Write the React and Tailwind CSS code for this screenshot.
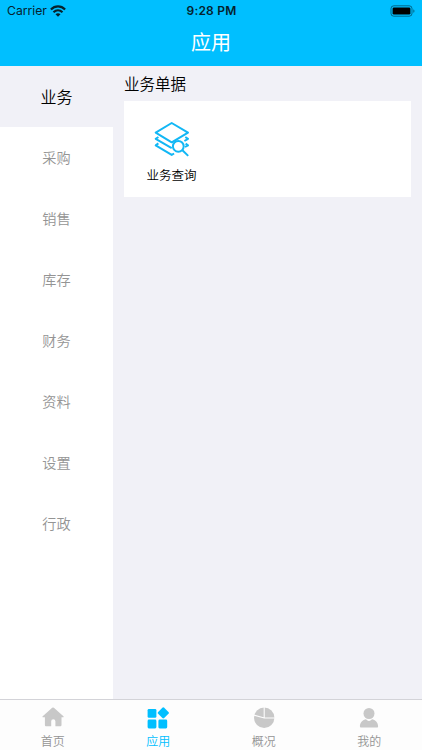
import clsx from 'clsx';

const CATEGORIES = ['业务', '采购', '销售', '库存', '财务', '资料', '设置', '行政'];

function WifiIcon() {
  return (
    <svg width="16" height="12" viewBox="0 0 16 12" fill="none" stroke="currentColor" strokeWidth="2.2">
      <path d="M.9 4.6C5 .4 11 .4 15.1 4.6" />
      <path d="M3.5 7.3c2.7-2.5 6.3-2.5 9 0" />
      <path d="M8 11.8 5.5 9.2c1.4-1.3 3.6-1.3 5 0z" fill="currentColor" stroke="none" />
    </svg>
  );
}

function BatteryIcon() {
  return (
    <svg width="26" height="12" viewBox="0 0 26 12">
      <rect x="1" y=".8" width="21" height="10.4" rx="2.8" fill="none" stroke="#000" strokeOpacity=".45" />
      <rect x="2.6" y="2.4" width="17.8" height="7.2" rx="1.4" fill="#000" />
      <path d="M23.4 4.2c1.4.5 1.4 3.1 0 3.6z" fill="#000" fillOpacity=".5" />
    </svg>
  );
}

function LayersSearchIcon() {
  return (
    <svg width="36" height="36" viewBox="0 0 36 36" fill="none" stroke="#12b7f5" strokeWidth="2" strokeLinejoin="round">
      <path d="M17.7 2 34 11.6l-16.3 9.7L1.7 11.6z" />
      <path d="M4.4 16 1.7 17.8l16 9.4M31.3 16l2.7 1.8-3.6 2.2" />
      <path d="M4.4 22.4l-2.7 1.9 16 9.6 2.4-1.4M31.6 22.6l2.4 1.7-3 1.7" />
      <circle cx="24.3" cy="25.3" r="5.4" fill="#fff" />
      <path d="M28.4 29.3 34.2 34.9" />
    </svg>
  );
}

function HomeIcon() {
  return (
    <svg width="22" height="22" viewBox="0 0 22 22" fill="currentColor">
      <path d="M10.2.8a1.3 1.3 0 0 1 1.7 0l9.5 8.4c.5.5.3 1-.3 1h-1.6v7.7c0 .9-.5 1.4-1.4 1.4h-4.7v-5a2.1 2.1 0 0 0-4.2 0v5H4.3c-.9 0-1.4-.5-1.4-1.4v-7.7H1c-.6 0-.8-.5-.3-1z" />
    </svg>
  );
}

function AppsIcon() {
  return (
    <svg width="22" height="22" viewBox="0 0 22 22" fill="currentColor">
      <rect x=".6" y="2" width="8.8" height="8.8" rx="1.3" />
      <rect x=".6" y="12.6" width="8.8" height="8.8" rx="1.3" />
      <rect x="11.4" y="12.6" width="8.8" height="8.8" rx="1.3" />
      <rect x="12" y="1.6" width="8.6" height="8.6" rx="1.3" transform="rotate(45 16.3 5.9)" />
    </svg>
  );
}

function PieIcon() {
  return (
    <svg width="22" height="22" viewBox="0 0 22 22">
      <circle cx="11.2" cy="10.7" r="10.2" fill="currentColor" />
      <path d="M11.2 0v11H22M11.2 11 0 7.9" fill="none" stroke="#fdfdfd" strokeWidth="1.1" />
    </svg>
  );
}

function UserIcon() {
  return (
    <svg width="22" height="22" viewBox="0 0 22 22" fill="currentColor">
      <circle cx="11" cy="6.5" r="5.5" />
      <path d="M7.5 12.3c.9 0 1.8 1.7 3.5 1.7s2.6-1.7 3.5-1.7c3.2.8 5.5 3.6 5.6 7 0 .8-.3 1.2-.9 1.2H2.8c-.6 0-.9-.4-.9-1.2.1-3.4 2.4-6.2 5.6-7z" />
    </svg>
  );
}

const TABS = [
  { label: '首页', icon: HomeIcon },
  { label: '应用', icon: AppsIcon, active: true },
  { label: '概况', icon: PieIcon },
  { label: '我的', icon: UserIcon },
];

export default function App() {
  return (
    <div className="flex h-[750px] w-[422px] flex-col overflow-hidden bg-[#f1f1f7] font-['Noto_Sans_CJK_SC',sans-serif] font-[350]">
      <header className="h-[66px] shrink-0 bg-[#00bfff]">
        <div className="grid h-[22px] grid-cols-3 items-center pr-1.5 pl-[7px] font-['Inter',sans-serif] text-[#06222d]">
          <div className="flex items-center gap-[3px]">
            <span className="text-[12.2px] font-normal">Carrier</span>
            <WifiIcon />
          </div>
          <span className="text-center text-[12px] font-semibold tracking-[0.2px]">9:28 PM</span>
          <div className="flex justify-end">
            <BatteryIcon />
          </div>
        </div>
        <h1 className="flex h-10 items-center justify-center text-[20px] font-normal text-white">应用</h1>
      </header>

      <main className="flex min-h-0 flex-1">
        <nav className="w-[113px] shrink-0 bg-white">
          {CATEGORIES.map((name, i) => (
            <div
              key={name}
              className={clsx(
                'flex h-[61px] items-center justify-center',
                i === 0 ? 'bg-[#f1f1f7] pb-0.5 text-[16px] text-black' : 'text-[14.2px] text-[#949494]'
              )}
            >
              {name}
            </div>
          ))}
        </nav>

        <section className="flex-1 pr-[11px] pl-[11px]">
          <h2 className="flex h-[35px] items-center text-[15.5px] font-[350] text-black">业务单据</h2>
          <div className="h-24 bg-white">
            <div className="flex w-[95px] flex-col items-center pt-5">
              <LayersSearchIcon />
              <span className="mt-2 text-[12.5px] leading-5 text-black">业务查询</span>
            </div>
          </div>
        </section>
      </main>

      <footer className="grid h-[51px] shrink-0 grid-cols-4 border-t border-[#d3d3d8] bg-[#fdfdfd]">
        {TABS.map(({ label, icon: Icon, active }) => (
          <div
            key={label}
            className={clsx('flex flex-col items-center pt-[7px]', active ? 'text-[#00bfff]' : 'text-[#c8c8c8]')}
          >
            <Icon />
            <span className={clsx('mt-1 text-[12px] leading-4', !active && 'text-[#949494]')}>{label}</span>
          </div>
        ))}
      </footer>
    </div>
  );
}
